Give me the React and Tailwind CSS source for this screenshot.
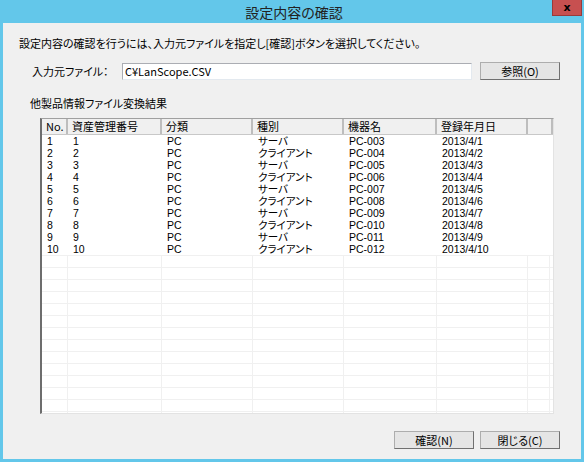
import React from "react";

const FONT = { fontFamily: '"Noto Sans CJK JP", "Noto Sans", sans-serif' };
const ROWFONT = { fontFamily: '"Liberation Sans", "Noto Sans CJK JP", sans-serif' };

const rows = [
  ["1", "1", "PC", "サーバ", "PC-003", "2013/4/1"],
  ["2", "2", "PC", "クライアント", "PC-004", "2013/4/2"],
  ["3", "3", "PC", "サーバ", "PC-005", "2013/4/3"],
  ["4", "4", "PC", "クライアント", "PC-006", "2013/4/4"],
  ["5", "5", "PC", "サーバ", "PC-007", "2013/4/5"],
  ["6", "6", "PC", "クライアント", "PC-008", "2013/4/6"],
  ["7", "7", "PC", "サーバ", "PC-009", "2013/4/7"],
  ["8", "8", "PC", "クライアント", "PC-010", "2013/4/8"],
  ["9", "9", "PC", "サーバ", "PC-011", "2013/4/9"],
  ["10", "10", "PC", "クライアント", "PC-012", "2013/4/10"],
];

const headers = ["No.", "資産管理番号", "分類", "種別", "機器名", "登録年月日"];
const widths = ["w-[26px]", "w-[94px]", "w-[91px]", "w-[91px]", "w-[93px]", "w-[91px]"];

function Button({ children }) {
  return (
    <button className="w-[80px] h-[18px] bg-[#e5e5e5] border border-[#adadad] border-r-[#707070] border-b-[#707070] text-[11px] leading-[13px] text-black flex items-center justify-center [font-feature-settings:'palt']">
      {children}
    </button>
  );
}

export default function App() {
  return (
    <div
      className="w-[584px] h-[462px] bg-[#63c7ea] flex flex-col text-black overflow-hidden"
      style={FONT}
    >
      <div className="h-[23px] relative flex items-center justify-center shrink-0">
        <span className="text-[14px] leading-[16px] text-[#222] [font-feature-settings:'palt'] ml-[4px]">
          設定内容の確認
        </span>
        <div className="absolute right-[2px] top-0 w-[30px] h-[16px] bg-[#c75050] border border-[#9a3a3a] border-t-0 flex items-center justify-center">
          <span className="text-[11px] font-bold leading-none text-black" style={{ fontFamily: '"DejaVu Sans", sans-serif' }}>
            x
          </span>
        </div>
      </div>
      <div className="flex-1 mx-[3px] mb-[3px] bg-[#f0f0f0] flex flex-col">
        <div className="pt-[13px] pl-[16px] text-[11px] leading-[14px] [font-feature-settings:'palt'] whitespace-nowrap">
          設定内容の確認を行うには、入力元ファイルを指定し[確認]ボタンを選択してください。
        </div>
        <div className="mt-[12px] flex items-center pl-[29px]">
          <div className="w-[90px] text-[11px] leading-[14px] [font-feature-settings:'palt'] whitespace-nowrap">
            入力元ファイル：
          </div>
          <div className="w-[350px] h-[17px] bg-white border border-[#abadb3] border-b-[#e3e9ef] border-r-[#e3e9ef] flex items-center pl-[2px] text-[11px] leading-[14px] whitespace-nowrap">
            C¥LanScope.CSV
          </div>
          <div className="ml-[8px]">
            <Button>参照(O)</Button>
          </div>
        </div>
        <div className="mt-[16px] pl-[27px] text-[11px] leading-[14px] [font-feature-settings:'palt'] whitespace-nowrap">
          他製品情報ファイル変換結果
        </div>
        <div className="mt-[8px] ml-[37px] w-[514px] h-[296px] bg-white border-l-2 border-t border-l-[#6d6d6d] border-t-[#a0a0a0] border-r border-b border-r-[#e3e3e3] border-b-[#e3e3e3] flex flex-col overflow-hidden">
          <div className="h-[16px] shrink-0 flex bg-[#f0f0f0] border-b border-[#c8c8c8]">
            {headers.map((h, i) => (
              <div
                key={h}
                className={`${widths[i]} shrink-0 border-r-2 border-[#bdbdbd] pl-[4px] text-[11px] leading-[15px] [font-feature-settings:'palt'] whitespace-nowrap overflow-hidden`}
              >
                {h}
              </div>
            ))}
            <div className="flex-1 border-r-2 border-[#bdbdbd]" />
          </div>
          {rows.map((r, ri) => (
            <div key={ri} className="h-[12px] shrink-0 flex" style={ROWFONT}>
              {r.map((c, ci) => (
                <div
                  key={ci}
                  className={`${widths[ci]} shrink-0 pl-[5px] text-[10.5px] leading-[12px] [font-feature-settings:'palt'] whitespace-nowrap`}
                >
                  {c}
                </div>
              ))}
              <div className="flex-1" />
            </div>
          ))}
          {Array.from({ length: 14 }).map((_, i) => (
            <div key={`e${i}`} className="h-[12px] shrink-0 flex border-t border-[#f0f0f0]">
              {widths.map((w, ci) => (
                <div key={ci} className={`${w} shrink-0 border-r border-[#f0f0f0]`} />
              ))}
              <div className="w-[22px] shrink-0 border-r border-[#f0f0f0]" />
            </div>
          ))}
        </div>
        <div className="mt-[17px] flex justify-end gap-[6px] pr-[21px]">
          <Button>確認(N)</Button>
          <Button>閉じる(C)</Button>
        </div>
      </div>
    </div>
  );
}
